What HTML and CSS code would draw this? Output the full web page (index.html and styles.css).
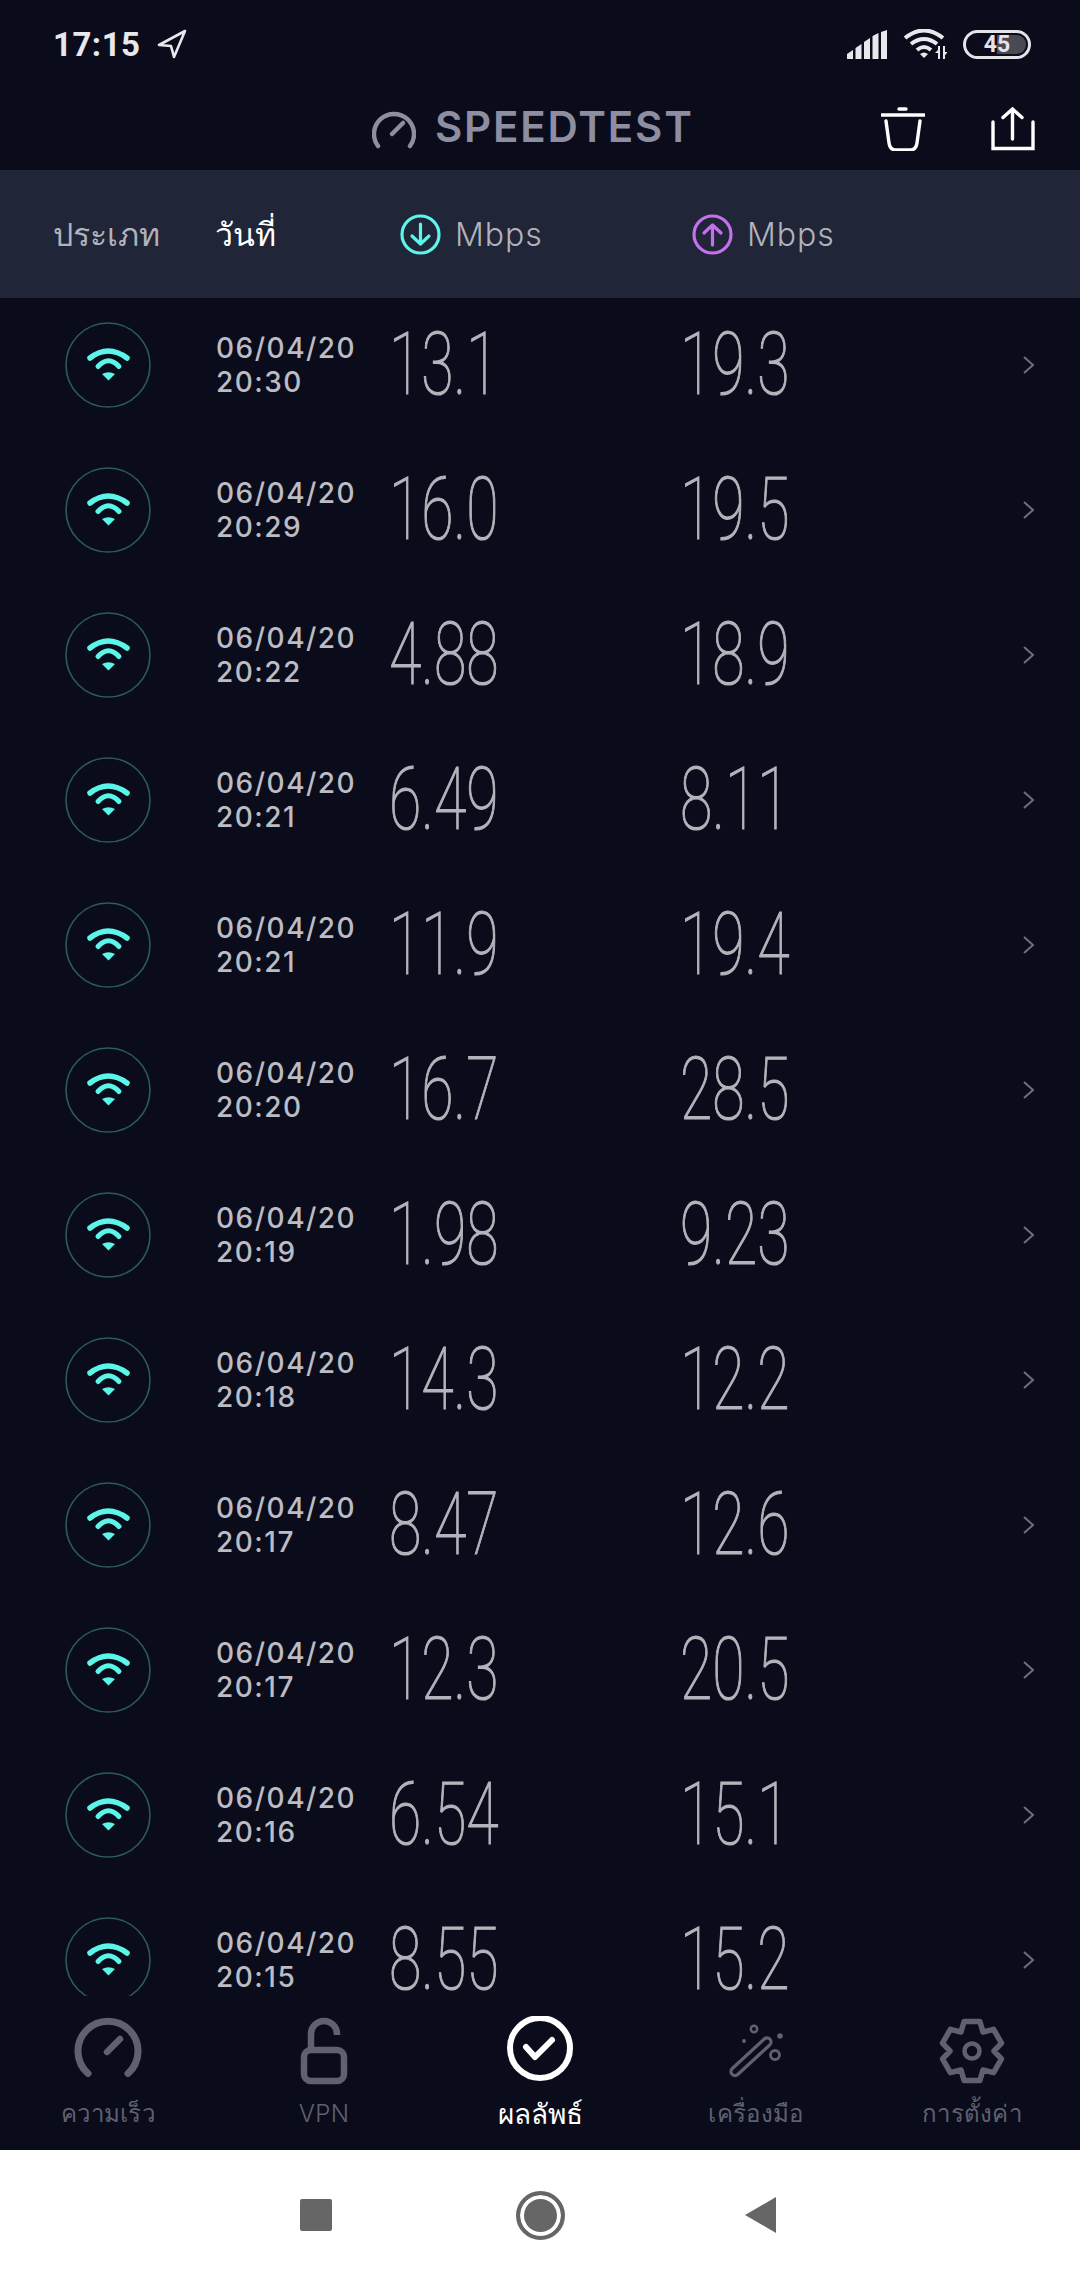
FILE: index.html
```html
<!DOCTYPE html>
<html lang="th">
<head>
    <meta charset="UTF-8">
    <meta name="viewport" content="width=device-width, initial-scale=1.0">
    <title>Speedtest - ผลลัพธ์</title>
    <link rel="stylesheet" href="styles.css">
</head>
<body>
    <svg class="defs" width="0" height="0">
        <symbol id="wifi" viewBox="0 0 86 86">
            <circle cx="43" cy="43" r="42" fill="none" stroke="#2b5a62" stroke-width="1.6"/>
            <path d="M25 36Q43 22 62 36" fill="none" stroke="#5cf5ea" stroke-width="5.5" stroke-linecap="round"/>
            <path d="M33 44.5Q43.5 33 54 44.5" fill="none" stroke="#5cf5ea" stroke-width="5" stroke-linecap="round"/>
            <path d="M37 52Q43.5 48.5 50 52L43.5 58.5Z" fill="#5cf5ea"/>
        </symbol>
        <symbol id="chevron" viewBox="0 0 13 18">
            <path d="M2 1L11 9L2 17" fill="none" stroke="#6d6e7e" stroke-width="2"/>
        </symbol>
    </svg>

    <div id="app">
        <div class="status-bar">
            <span class="clock">17:15</span>
            <svg class="location" width="30" height="30" viewBox="0 0 30 30">
                <path d="M28 2L2 16L14 17L17 28Z" fill="none" stroke="#e8e8ec" stroke-width="2.6" stroke-linejoin="round"/>
            </svg>
            <div class="status-right">
                <svg width="40" height="29" viewBox="0 0 40 29">
                    <path d="M0 29V24L6 20V29ZM8.500 29V18L14.500 14V29ZM17 29V12L23 8V29ZM25.500 29V6L31.500 3V29ZM34 29V2L40 0V29Z" fill="#e8e8ec"/>
                </svg>
                <svg width="44" height="30" viewBox="0 0 44 30">
                    <path d="M2 9Q21 -6 40 9" fill="none" stroke="#e8e8ec" stroke-width="4"/>
                    <path d="M8 15Q21 5 34 15" fill="none" stroke="#e8e8ec" stroke-width="4"/>
                    <path d="M14 21Q21 15 28 21" fill="none" stroke="#e8e8ec" stroke-width="4"/>
                    <path d="M17 25Q21 22 25 25L21 29Z" fill="#e8e8ec"/>
                    <path d="M36 17V30M41 17V30" stroke="#e8e8ec" stroke-width="2"/>
                    <path d="M36 20L32 24H36ZM41 27L45 23H41Z" fill="#e8e8ec"/>
                </svg>
                <div class="battery">45</div>
            </div>
        </div>

        <div class="top-bar">
            <svg class="title-icon" width="44" height="40" viewBox="0 0 44 40">
                <path d="M6 37A20 20 0 1 1 38 37" fill="none" stroke="#8e8ea2" stroke-width="4.500" stroke-linecap="round"/>
                <path d="M20 25L31 14" stroke="#8e8ea2" stroke-width="4.500" stroke-linecap="round"/>
            </svg>
            <span class="title">SPEEDTEST</span>
            <div class="top-actions">
                <svg width="44" height="44" viewBox="0 0 44 44">
                    <path d="M1 8H43M18 2H25M5 14L8 36Q9 43 15 43H29Q35 43 36 36L39 14" fill="none" stroke="#fff" stroke-width="3.400" stroke-linecap="round"/>
                </svg>
                <svg width="44" height="44" viewBox="0 0 44 44">
                    <path d="M2 15V41.500H42V15M21.500 32V2M12 10.500L21.500 2L31 10.500" fill="none" stroke="#fff" stroke-width="3.400" stroke-linecap="round"/>
                </svg>
            </div>
        </div>

        <div class="table-head">
            <span class="head-type">ประเภท</span>
            <span class="head-date">วันที่</span>
            <div class="head-speed">
                <svg width="41" height="41" viewBox="0 0 41 41">
                    <circle cx="20.500" cy="20.500" r="18.500" fill="none" stroke="#5cf5ea" stroke-width="3.200"/>
                    <path d="M20.500 10V30M12 22L20.500 30L29 22" fill="none" stroke="#5cf5ea" stroke-width="3.200" stroke-linecap="round" stroke-linejoin="round"/>
                </svg>
                <span>Mbps</span>
            </div>
            <div class="head-speed">
                <svg width="41" height="41" viewBox="0 0 41 41">
                    <circle cx="20.500" cy="20.500" r="18.500" fill="none" stroke="#c570ef" stroke-width="3.200"/>
                    <path d="M20.500 31V11M12 19L20.500 11L29 19" fill="none" stroke="#c570ef" stroke-width="3.200" stroke-linecap="round" stroke-linejoin="round"/>
                </svg>
                <span>Mbps</span>
            </div>
        </div>

        <div class="results">
            <div class="row"><svg class="row-icon"><use href="#wifi"/></svg><div class="date">06/04/20<br>20:30</div><div class="num"><span>13.1</span></div><div class="num"><span>19.3</span></div><svg class="chevron"><use href="#chevron"/></svg></div>
            <div class="row"><svg class="row-icon"><use href="#wifi"/></svg><div class="date">06/04/20<br>20:29</div><div class="num"><span>16.0</span></div><div class="num"><span>19.5</span></div><svg class="chevron"><use href="#chevron"/></svg></div>
            <div class="row"><svg class="row-icon"><use href="#wifi"/></svg><div class="date">06/04/20<br>20:22</div><div class="num"><span>4.88</span></div><div class="num"><span>18.9</span></div><svg class="chevron"><use href="#chevron"/></svg></div>
            <div class="row"><svg class="row-icon"><use href="#wifi"/></svg><div class="date">06/04/20<br>20:21</div><div class="num"><span>6.49</span></div><div class="num"><span>8.11</span></div><svg class="chevron"><use href="#chevron"/></svg></div>
            <div class="row"><svg class="row-icon"><use href="#wifi"/></svg><div class="date">06/04/20<br>20:21</div><div class="num"><span>11.9</span></div><div class="num"><span>19.4</span></div><svg class="chevron"><use href="#chevron"/></svg></div>
            <div class="row"><svg class="row-icon"><use href="#wifi"/></svg><div class="date">06/04/20<br>20:20</div><div class="num"><span>16.7</span></div><div class="num"><span>28.5</span></div><svg class="chevron"><use href="#chevron"/></svg></div>
            <div class="row"><svg class="row-icon"><use href="#wifi"/></svg><div class="date">06/04/20<br>20:19</div><div class="num"><span>1.98</span></div><div class="num"><span>9.23</span></div><svg class="chevron"><use href="#chevron"/></svg></div>
            <div class="row"><svg class="row-icon"><use href="#wifi"/></svg><div class="date">06/04/20<br>20:18</div><div class="num"><span>14.3</span></div><div class="num"><span>12.2</span></div><svg class="chevron"><use href="#chevron"/></svg></div>
            <div class="row"><svg class="row-icon"><use href="#wifi"/></svg><div class="date">06/04/20<br>20:17</div><div class="num"><span>8.47</span></div><div class="num"><span>12.6</span></div><svg class="chevron"><use href="#chevron"/></svg></div>
            <div class="row"><svg class="row-icon"><use href="#wifi"/></svg><div class="date">06/04/20<br>20:17</div><div class="num"><span>12.3</span></div><div class="num"><span>20.5</span></div><svg class="chevron"><use href="#chevron"/></svg></div>
            <div class="row"><svg class="row-icon"><use href="#wifi"/></svg><div class="date">06/04/20<br>20:16</div><div class="num"><span>6.54</span></div><div class="num"><span>15.1</span></div><svg class="chevron"><use href="#chevron"/></svg></div>
            <div class="row"><svg class="row-icon"><use href="#wifi"/></svg><div class="date">06/04/20<br>20:15</div><div class="num"><span>8.55</span></div><div class="num"><span>15.2</span></div><svg class="chevron"><use href="#chevron"/></svg></div>
        </div>

        <div class="tabs">
            <div class="tab">
                <svg width="72" height="72" viewBox="0 0 72 72">
                    <path d="M16 57.500A30 30 0 1 1 56 57.500" fill="none" stroke="#5f6072" stroke-width="7" stroke-linecap="round"/>
                    <path d="M35 36L48 23" stroke="#5f6072" stroke-width="6.500" stroke-linecap="round"/>
                </svg>
                <span>ความเร็ว</span>
            </div>
            <div class="tab">
                <svg width="72" height="72" viewBox="0 0 72 72">
                    <rect x="16" y="34" width="40" height="31" rx="7" fill="none" stroke="#5f6072" stroke-width="6.500"/>
                    <path d="M23 34V18A13 13 0 0 1 49 18V19" fill="none" stroke="#5f6072" stroke-width="6.500"/>
                </svg>
                <span>VPN</span>
            </div>
            <div class="tab active">
                <svg width="72" height="72" viewBox="0 0 72 72">
                    <circle cx="36" cy="32" r="30" fill="none" stroke="#fff" stroke-width="6"/>
                    <path d="M22 31L31 41L48 24" fill="none" stroke="#fff" stroke-width="6" stroke-linecap="round" stroke-linejoin="round"/>
                </svg>
                <span>ผลลัพธ์</span>
            </div>
            <div class="tab">
                <svg width="72" height="72" viewBox="0 0 72 72">
                    <path d="M12.300 52.500L44.300 23A4 4 0 0 1 49.700 29L17.700 58.500A4 4 0 0 1 12.300 52.500Z" fill="none" stroke="#5f6072" stroke-width="3.200"/>
                    <circle cx="34" cy="13" r="3.200" fill="none" stroke="#5f6072" stroke-width="2.500"/>
                    <circle cx="60" cy="20" r="2.800" fill="#5f6072"/>
                    <circle cx="24" cy="25" r="2" fill="#5f6072"/>
                    <circle cx="55" cy="39" r="4.500" fill="none" stroke="#5f6072" stroke-width="2.800"/>
                </svg>
                <span>เครื่องมือ</span>
            </div>
            <div class="tab">
                <svg width="72" height="72" viewBox="0 0 72 72">
                    <path d="M28.100 5.500H43.900L47 16L57.600 13.400L65.500 27.100L58 35L65.500 42.900L57.600 56.600L47 54L43.900 64.500H28.100L25 54L14.400 56.600L6.500 42.900L14 35L6.500 27.100L14.400 13.400L25 16Z" fill="none" stroke="#5f6072" stroke-width="5.500" stroke-linejoin="round"/>
                    <circle cx="36" cy="35" r="7.500" fill="none" stroke="#5f6072" stroke-width="4.500"/>
                </svg>
                <span>การตั้งค่า</span>
            </div>
        </div>

        <div class="nav-bar">
            <div class="nav-square"></div>
            <div class="nav-home"></div>
            <svg width="31" height="36" viewBox="0 0 31 36">
                <path d="M0 18L31 0V36Z" fill="#666"/>
            </svg>
        </div>
    </div>
</body>
</html>
```

FILE: styles.css
```css
body {
    margin: 0;
    background-color: #0a0c1b;
    font-family: "Inter", "Noto Sans", sans-serif;
}
.defs {
    position: absolute;
}
#app {
    width: 1080px;
    height: 2280px;
    display: flex;
    flex-direction: column;
    overflow: hidden;
}
svg {
    display: block;
    flex-shrink: 0;
}

/* status bar */
.status-bar {
    height: 88px;
    display: flex;
    align-items: center;
    padding: 0 49px 0 53px;
    flex-shrink: 0;
}
.clock {
    font-family: "Roboto", sans-serif;
    font-size: 33px;
    font-weight: 700;
    letter-spacing: 0.500px;
    color: #e8e8ec;
}
.location {
    margin-left: 16px;
}
.status-right {
    margin-left: auto;
    display: flex;
    align-items: center;
    gap: 16px;
}
.battery {
    width: 68px;
    height: 29px;
    box-sizing: border-box;
    border: 3px solid #e4e4e8;
    border-radius: 15px;
    background: linear-gradient(to right, transparent 50%, #4a4a55 50%) content-box;
    padding: 2px;
    font-family: "Roboto", sans-serif;
    font-size: 23px;
    font-weight: 700;
    line-height: 19px;
    text-align: center;
    color: #e4e4e8;
}

/* title */
.top-bar {
    height: 82px;
    display: flex;
    align-items: center;
    padding: 0 45px 0 372px;
    flex-shrink: 0;
}
.title {
    margin: 0 0 6px 19px;
    font-size: 42px;
    font-weight: 600;
    letter-spacing: 1.800px;
    color: #8e8ea2;
}
.top-actions {
    margin-left: auto;
    display: flex;
    gap: 66px;
}

/* table head */
.table-head {
    height: 128px;
    display: flex;
    align-items: center;
    padding-left: 53px;
    background-color: #212538;
    color: #b2b2bc;
    font-size: 32px;
    flex-shrink: 0;
}
.head-type {
    width: 162px;
}
.head-date {
    width: 185px;
    color: #fff;
}
.head-speed {
    width: 292px;
    display: flex;
    align-items: center;
    gap: 14px;
    letter-spacing: 1px;
    font-weight: 300;
}

/* results: the tab bar below paints over the last row */
.results {
    flex: 1;
    min-height: 0;
}
.row {
    height: 134px;
    padding-bottom: 11px;
    display: flex;
    align-items: center;
    padding-left: 65px;
}
.row-icon {
    width: 86px;
    height: 86px;
    margin-right: 65px;
}
.date {
    width: 176px;
    font-size: 28px;
    font-weight: 500;
    letter-spacing: 1.500px;
    line-height: 34.500px;
    color: #bcbcc4;
}
.num {
    width: 291px;
    height: 70px;
    margin-bottom: 3px;
    font-family: "Roboto", sans-serif;
    font-size: 88px;
    font-weight: 100;
    line-height: 70px;
    color: #b4b4bc;
    -webkit-text-stroke: 1.200px #b4b4bc;
}
.num span {
    display: inline-block;
    transform: scaleX(0.67);
    transform-origin: left center;
    margin-left: -3px;
}
.chevron {
    width: 13px;
    height: 18px;
    margin-left: 48px;
}

/* bottom tabs */
.tabs {
    position: relative;
    height: 154px;
    box-sizing: border-box;
    padding-top: 20px;
    display: flex;
    flex-shrink: 0;
    background-color: #0a0c1b;
}
.tab {
    width: 216px;
    display: flex;
    flex-direction: column;
    align-items: center;
    gap: 9px;
    font-size: 24px;
    font-weight: 300;
    letter-spacing: 0.300px;
    line-height: 34px;
    color: #5f6072;
}
.tab.active {
    color: #fff;
    font-size: 28px;
    font-weight: 400;
    letter-spacing: 0;
}

/* android nav */
.nav-bar {
    position: relative;
    height: 130px;
    background-color: #fff;
    display: flex;
    align-items: center;
    padding-left: 300px;
    flex-shrink: 0;
}
.nav-square {
    width: 32px;
    height: 32px;
    background-color: #666;
    border-radius: 2px;
}
.nav-home {
    width: 49px;
    height: 49px;
    box-sizing: border-box;
    margin: 0 180px 0 184px;
    border: 4px solid #666;
    border-radius: 50%;
    background-color: #666;
    box-shadow: inset 0 0 0 4px #fff;
}
```
